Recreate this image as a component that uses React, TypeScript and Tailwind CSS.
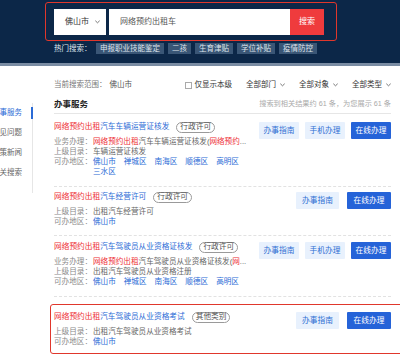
import { ReactNode } from 'react'

const RED = 'text-[#ee2d33]'
const BLUE = 'text-[#2b6bd6]'

function Chevron({ className = '' }: { className?: string }) {
  return (
    <svg width="5" height="4" viewBox="0 0 5 4" className={className} fill="none" stroke="currentColor" strokeWidth="0.9">
      <path d="M0.6 1l1.9 1.8L4.4 1" strokeLinecap="round" strokeLinejoin="round" />
    </svg>
  )
}

interface Row {
  label: string
  value: ReactNode
}

interface CardProps {
  rest: string
  tag: string
  rows: Row[]
  mobile?: boolean
  pad: string
  last?: boolean
}

function Areas({ list }: { list: string[] }) {
  return (
    <div className="flex flex-wrap gap-x-[8px]">
      {list.map((a) => (
        <span key={a} className={BLUE}>
          {a}
        </span>
      ))}
    </div>
  )
}

function Card({ rest, tag, rows, mobile, pad, last }: CardProps) {
  return (
    <div className={`flex justify-between ${pad} ${last ? '' : 'border-b border-dashed border-[#e2e2e2]'}`}>
      <div className="w-[197px]">
        <div className="flex items-center h-[12px] whitespace-nowrap text-[7.7px]">
          <span className={RED}>网络预约出租</span>
          <span className={BLUE}>{rest}</span>
          <span className="ml-[7px] h-[11px] px-[3px] rounded-full border border-[#9a9a9a] text-[#555] flex items-center leading-none">
            {tag}
          </span>
        </div>
        <div className="mt-[4px] text-[7.6px] leading-[10px]">
          {rows.map((r) => (
            <div key={r.label} className="flex">
              <span className="w-[39px] shrink-0 text-[#8a8a8a]">{r.label}：</span>
              <div className="min-w-0 flex-1 text-[#666]">{r.value}</div>
            </div>
          ))}
        </div>
      </div>
      <div className={`flex mt-[1px] ${mobile ? 'gap-[6px]' : 'gap-[8px]'}`}>
        <button className={`${mobile ? 'w-[40px]' : 'w-[43px]'} h-[17px] bg-[#e8f1fd] text-[#2f6fd3] text-[7.7px] rounded-[1px]`}>
          办事指南
        </button>
        {mobile && (
          <button className="w-[40px] h-[17px] bg-[#e8f1fd] text-[#2f6fd3] text-[7.7px] rounded-[1px]">手机办理</button>
        )}
        <button className={`${mobile ? 'w-[40px]' : 'w-[44px]'} h-[17px] bg-[#2563d8] text-white text-[7.7px] rounded-[1px]`}>
          在线办理
        </button>
      </div>
    </div>
  )
}

const allAreas = ['佛山市', '禅城区', '南海区', '顺德区', '高明区', '三水区']

export default function App() {
  return (
    <div className="relative w-[400px] h-[355px] overflow-hidden bg-white font-['Liberation_Sans','Noto_Sans_CJK_SC',sans-serif]">
      <header className="bg-[#0c2748] h-[66px] pl-[54px] pt-[9px] border-b-[3px] border-[#7a8ca3]">
        <div className="flex h-[26px]">
          <div className="w-[52px] bg-white flex items-center pl-[11px] text-[8px] text-[#333]">
            佛山市
            <Chevron className="ml-[6px] text-[#666]" />
          </div>
          <div className="ml-[3px] w-[181px] bg-white flex items-center pl-[11px] text-[8px] text-[#555]">网络预约出租车</div>
          <button className="w-[34px] bg-[#ef3b3d] text-white text-[8px]">搜索</button>
        </div>
        <div className="mt-[8px] flex items-center text-[7.5px] text-[#dfe5ec]">
          <span className="w-[42px]">热门搜索：</span>
          <div className="flex gap-[4px]">
            {['申报职业技能鉴定', '二孩', '生育津贴', '学位补贴', '疫情防控'].map((t) => (
              <span key={t} className="h-[11px] px-[4px] bg-[#3a5676] flex items-center leading-none">
                {t}
              </span>
            ))}
          </div>
        </div>
      </header>

      <div className="flex">
        <aside className="w-[33px] mt-[37px] h-[90px] border-r border-[#e6e6e6] text-[7.5px] self-start">
          {['事服务', '见问题', '策新闻', '关搜索'].map((s, i) => (
            <div
              key={s}
              className={`relative h-[20px] flex items-center justify-end pr-[10px] whitespace-nowrap ${i === 0 ? BLUE : 'text-[#666]'}`}
            >
              {s}
              {i === 0 && <span className="absolute right-[-1px] top-[4px] w-[2px] h-[12px] bg-[#2b6bd6]" />}
            </div>
          ))}
        </aside>

        <main className="ml-[21px] w-[337px]">
          <div className="mt-[13px] h-[12px] flex items-center justify-between text-[7.5px] whitespace-nowrap">
            <span className="text-[#777]">
              当前搜索范围：<span className="ml-[3px] text-[#555]">佛山市</span>
            </span>
            <div className="flex items-center text-[#333]">
              <span className="w-[7px] h-[7px] border border-[#aaa] bg-white mr-[3px]" />
              <span>仅显示本级</span>
              {['全部部门', '全部对象', '全部类型'].map((f) => (
                <span key={f} className="ml-[14px] flex items-center">
                  {f}
                  <Chevron className="ml-[4px] text-[#666]" />
                </span>
              ))}
            </div>
          </div>

          <div className="mt-[7px] pb-[3px] border-b border-[#e6e6e6] flex items-center justify-between h-[16px]">
            <span className="text-[8.5px] font-bold text-[#222]">办事服务</span>
            <span className="text-[7.2px] text-[#aaa]">搜索到相关结果约 61 条，为您展示 61 条</span>
          </div>

          <Card
            pad="pt-[7px] pb-[9px]"
            rest="汽车车辆运营证核发"
            tag="行政许可"
            mobile
            rows={[
              {
                label: '业务办理',
                value: (
                  <div className="whitespace-nowrap">
                    <span className={RED}>网络预约出租</span>汽车车辆运营证核发(<span className={RED}>网络预约</span>...
                  </div>
                ),
              },
              { label: '上级目录', value: '车辆运营证核发' },
              { label: '可办地区', value: <Areas list={allAreas} /> },
            ]}
          />
          <Card
            pad="pt-[4px] pb-[8px]"
            rest="汽车经营许可"
            tag="行政许可"
            rows={[
              { label: '上级目录', value: '出租汽车经营许可' },
              { label: '可办地区', value: <Areas list={['佛山市']} /> },
            ]}
          />
          <Card
            pad="pt-[5px] pb-[9px]"
            rest="汽车驾驶员从业资格证核发"
            tag="行政许可"
            mobile
            rows={[
              {
                label: '业务办理',
                value: (
                  <div className="whitespace-nowrap">
                    <span className={RED}>网络预约出租</span>汽车驾驶员从业资格证核发(<span className={RED}>网</span>...
                  </div>
                ),
              },
              { label: '上级目录', value: '出租汽车驾驶员从业资格注册' },
              { label: '可办地区', value: <Areas list={['佛山市', '禅城区', '南海区', '顺德区', '高明区']} /> },
            ]}
          />
          <Card
            pad="pt-[14px] pb-[8px]"
            last
            rest="汽车驾驶员从业资格考试"
            tag="其他类别"
            rows={[
              { label: '上级目录', value: '出租汽车驾驶员从业资格考试' },
              { label: '可办地区', value: <Areas list={['佛山市']} /> },
            ]}
          />
        </main>
      </div>

      <div className="absolute left-[45px] top-[2px] w-[292px] h-[39px] border-[1.5px] border-[#e0372c] rounded-[3px]" />
      <div className="absolute left-[50px] top-[304px] w-[354px] h-[50px] border-[1.5px] border-[#e0372c] rounded-[3px]" />
    </div>
  )
}
